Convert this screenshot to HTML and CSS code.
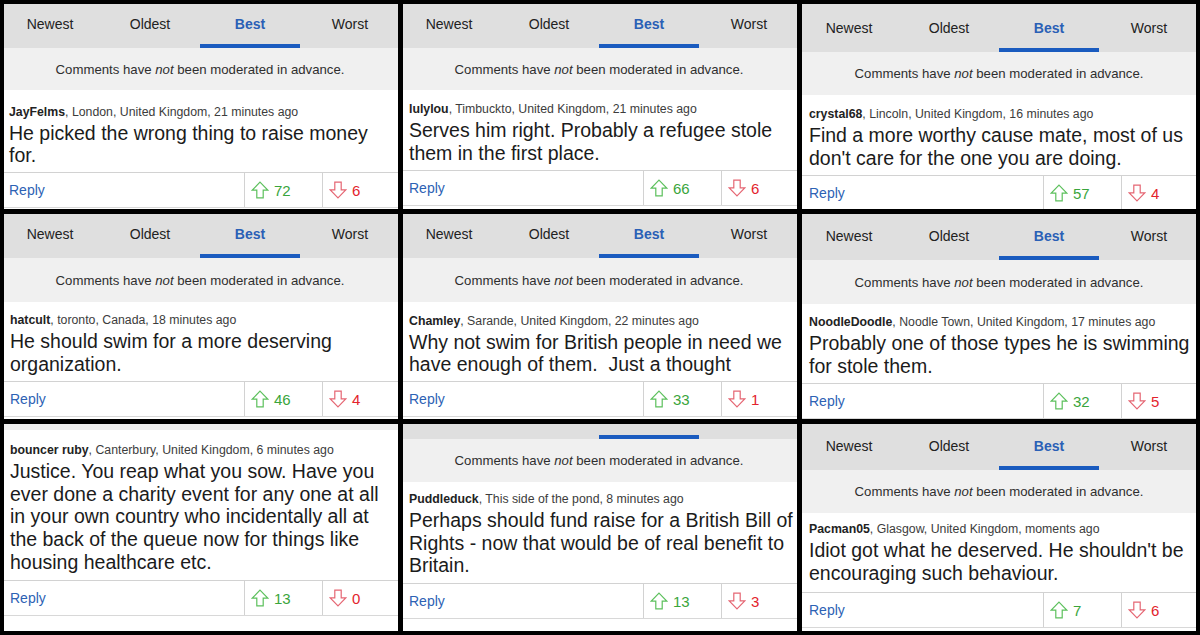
FILE: index.html
```html
<!DOCTYPE html>
<html lang="en">
<head>
<meta charset="utf-8">
<title>Comments</title>
<link rel="stylesheet" href="styles.css">
</head>
<body>
<svg width="0" height="0" class="defs" aria-hidden="true">
  <defs>
    <symbol id="up" viewBox="0 0 18 18"><path d="M9 1.2 L16.8 9.2 H12.2 V16.8 H5.8 V9.2 H1.2 Z" fill="none" stroke="currentColor" stroke-width="1.2" stroke-linejoin="miter"/></symbol>
    <symbol id="down" viewBox="0 0 18 18"><path d="M9 16.8 L16.8 8.8 H12.2 V1.2 H5.8 V8.8 H1.2 Z" fill="none" stroke="currentColor" stroke-width="1.2" stroke-linejoin="miter"/></symbol>
  </defs>
</svg>
<main class="grid">

  <section class="panel p1"><div class="inner">
    <nav class="tabs"><span class="tab">Newest</span><span class="tab">Oldest</span><span class="tab active">Best</span><span class="tab">Worst</span></nav>
    <div class="notice">Comments have&nbsp;<em>not</em>&nbsp;been moderated in advance.</div>
    <article class="comment"><p class="meta"><b>JayFelms</b>, London, United Kingdom, 21 minutes ago</p><p class="text">He picked the wrong thing to raise money for.</p></article>
    <footer class="actions"><span class="reply">Reply</span><span class="vote up"><svg><use href="#up"/></svg>72</span><span class="vote down"><svg><use href="#down"/></svg>6</span></footer>
  </div></section>

  <section class="panel p2"><div class="inner">
    <nav class="tabs"><span class="tab">Newest</span><span class="tab">Oldest</span><span class="tab active">Best</span><span class="tab">Worst</span></nav>
    <div class="notice">Comments have&nbsp;<em>not</em>&nbsp;been moderated in advance.</div>
    <article class="comment"><p class="meta"><b>lulylou</b>, Timbuckto, United Kingdom, 21 minutes ago</p><p class="text">Serves him right. Probably a refugee stole them in the first place.</p></article>
    <footer class="actions"><span class="reply">Reply</span><span class="vote up"><svg><use href="#up"/></svg>66</span><span class="vote down"><svg><use href="#down"/></svg>6</span></footer>
  </div></section>

  <section class="panel p3"><div class="inner">
    <nav class="tabs"><span class="tab">Newest</span><span class="tab">Oldest</span><span class="tab active">Best</span><span class="tab">Worst</span></nav>
    <div class="notice">Comments have&nbsp;<em>not</em>&nbsp;been moderated in advance.</div>
    <article class="comment"><p class="meta"><b>crystal68</b>, Lincoln, United Kingdom, 16 minutes ago</p><p class="text">Find a more worthy cause mate, most of us don't care for the one you are doing.</p></article>
    <footer class="actions"><span class="reply">Reply</span><span class="vote up"><svg><use href="#up"/></svg>57</span><span class="vote down"><svg><use href="#down"/></svg>4</span></footer>
  </div></section>

  <section class="panel p4"><div class="inner">
    <nav class="tabs"><span class="tab">Newest</span><span class="tab">Oldest</span><span class="tab active">Best</span><span class="tab">Worst</span></nav>
    <div class="notice">Comments have&nbsp;<em>not</em>&nbsp;been moderated in advance.</div>
    <article class="comment"><p class="meta"><b>hatcult</b>, toronto, Canada, 18 minutes ago</p><p class="text">He should swim for a more deserving organization.</p></article>
    <footer class="actions"><span class="reply">Reply</span><span class="vote up"><svg><use href="#up"/></svg>46</span><span class="vote down"><svg><use href="#down"/></svg>4</span></footer>
  </div></section>

  <section class="panel p5"><div class="inner">
    <nav class="tabs"><span class="tab">Newest</span><span class="tab">Oldest</span><span class="tab active">Best</span><span class="tab">Worst</span></nav>
    <div class="notice">Comments have&nbsp;<em>not</em>&nbsp;been moderated in advance.</div>
    <article class="comment"><p class="meta"><b>Chamley</b>, Sarande, United Kingdom, 22 minutes ago</p><p class="text">Why not swim for British people in need we have enough of them. &nbsp;Just a thought</p></article>
    <footer class="actions"><span class="reply">Reply</span><span class="vote up"><svg><use href="#up"/></svg>33</span><span class="vote down"><svg><use href="#down"/></svg>1</span></footer>
  </div></section>

  <section class="panel p6"><div class="inner">
    <nav class="tabs"><span class="tab">Newest</span><span class="tab">Oldest</span><span class="tab active">Best</span><span class="tab">Worst</span></nav>
    <div class="notice">Comments have&nbsp;<em>not</em>&nbsp;been moderated in advance.</div>
    <article class="comment"><p class="meta"><b>NoodleDoodle</b>, Noodle Town, United Kingdom, 17 minutes ago</p><p class="text">Probably one of those types he is swimming for stole them.</p></article>
    <footer class="actions"><span class="reply">Reply</span><span class="vote up"><svg><use href="#up"/></svg>32</span><span class="vote down"><svg><use href="#down"/></svg>5</span></footer>
  </div></section>

  <section class="panel p7"><div class="inner">
    <div class="strip"></div>
    <article class="comment"><p class="meta"><b>bouncer ruby</b>, Canterbury, United Kingdom, 6 minutes ago</p><p class="text">Justice. You reap what you sow. Have you ever done a charity event for any one at all in your own country who incidentally all at the back of the queue now for things like housing healthcare etc.</p></article>
    <footer class="actions"><span class="reply">Reply</span><span class="vote up"><svg><use href="#up"/></svg>13</span><span class="vote down"><svg><use href="#down"/></svg>0</span></footer>
  </div></section>

  <section class="panel p8"><div class="inner">
    <nav class="tabs"><span class="tab"></span><span class="tab"></span><span class="tab active"></span><span class="tab"></span></nav>
    <div class="notice">Comments have&nbsp;<em>not</em>&nbsp;been moderated in advance.</div>
    <article class="comment"><p class="meta"><b>Puddleduck</b>, This side of the pond, 8 minutes ago</p><p class="text">Perhaps should fund raise for a British Bill of Rights - now that would be of real benefit to Britain.</p></article>
    <footer class="actions"><span class="reply">Reply</span><span class="vote up"><svg><use href="#up"/></svg>13</span><span class="vote down"><svg><use href="#down"/></svg>3</span></footer>
  </div></section>

  <section class="panel p9"><div class="inner">
    <nav class="tabs"><span class="tab">Newest</span><span class="tab">Oldest</span><span class="tab active">Best</span><span class="tab">Worst</span></nav>
    <div class="notice">Comments have&nbsp;<em>not</em>&nbsp;been moderated in advance.</div>
    <article class="comment"><p class="meta"><b>Pacman05</b>, Glasgow, United Kingdom, moments ago</p><p class="text">Idiot got what he deserved. He shouldn't be encouraging such behaviour.</p></article>
    <footer class="actions"><span class="reply">Reply</span><span class="vote up"><svg><use href="#up"/></svg>7</span><span class="vote down"><svg><use href="#down"/></svg>6</span></footer>
  </div></section>

</main>
</body>
</html>
```
FILE: styles.css
```css
html, body {
  margin: 0;
  padding: 0;
  background: #000;
}
body {
  font-family: "Liberation Sans", Arial, sans-serif;
  width: 1200px;
  height: 635px;
  overflow: hidden;
}
.defs {
  position: absolute;
  width: 0;
  height: 0;
}
.grid {
  display: grid;
  grid-template-columns: 394px 394px 394px;
  grid-template-rows: 205px 205px 207px;
  column-gap: 5px;
  row-gap: 5px;
  padding: 4px;
}
.panel {
  background: #fff;
  overflow: hidden;
  --sx: -4px;
  --lift: 0px;
  --extra: 0px;
  --nh: 43px;
  --ch: 79px;
  --pt: 9px;
  --pl: 10px;
}
.inner {
  width: 400px;
  margin-left: var(--sx);
  margin-top: var(--lift);
}
.tabs {
  display: flex;
  background: #dfdfdf;
  padding-top: var(--extra);
}
.tab {
  width: 100px;
  height: 44px;
  box-sizing: border-box;
  padding-bottom: 4px;
  display: flex;
  align-items: center;
  justify-content: center;
  font-size: 14px;
  color: #222;
}
.tab.active {
  color: #2a60b6;
  font-weight: bold;
  padding-bottom: 0;
  border-bottom: 4px solid #1a5bbf;
}
.notice {
  height: var(--nh);
  background: #f0f0f0;
  display: flex;
  align-items: center;
  justify-content: center;
  font-size: 13.2px;
  color: #2e2e2e;
}
.notice em {
  font-style: italic;
}
.strip {
  height: 6px;
  background: #efefef;
}
.comment {
  height: var(--ch);
  box-sizing: border-box;
  padding: var(--pt) 3px 0 var(--pl);
  background: #fff;
}
.meta {
  margin: 0;
  font-size: 12.3px;
  line-height: 16px;
  color: #3c3c3c;
  white-space: nowrap;
}
.meta b {
  color: #222;
}
.text {
  margin: 2px 0 0;
  font-size: 19.5px;
  line-height: 22.7px;
  color: #1b1b1b;
}
.actions {
  display: flex;
  height: 36px;
  box-sizing: border-box;
  border-top: 1px solid #d2d2d2;
  border-bottom: 1px solid #d8d8d8;
  background: #fff;
}
.reply {
  width: 244px;
  box-sizing: border-box;
  padding-left: var(--pl);
  display: flex;
  align-items: center;
  font-size: 14px;
  color: #2d62b4;
}
.vote {
  width: 78px;
  box-sizing: border-box;
  border-left: 1px solid #d2d2d2;
  padding-left: 6px;
  display: flex;
  align-items: center;
  gap: 5px;
  font-size: 15px;
}
.vote svg {
  width: 18px;
  height: 18px;
  flex: none;
}
.vote.up {
  color: #3aa53c;
}
.vote.up svg {
  color: #5cc05c;
}
.vote.down {
  color: #e3232d;
}
.vote.down svg {
  color: #e56673;
}

.p1 { --nh: 42px; --ch: 82px; --pt: 13.5px; --pl: 9px; }
.p2 { --nh: 42px; --ch: 80px; --pt: 11px; }
.p3 { --sx: -3px; --extra: 4px; --nh: 43px; --ch: 80px; --pt: 11px; }
.p4 { --nh: 44px; --ch: 79px; --pt: 10px; }
.p5 { --nh: 44px; --ch: 79px; --pt: 10.5px; }
.p6 { --sx: -3px; --extra: 2px; --nh: 44px; --ch: 79px; --pt: 10px; }
.p7 { --ch: 150px; --pt: 12px; }
.p8 { --lift: -29px; --nh: 43px; --ch: 101px; --pt: 9px; }
.p9 { --sx: -3px; --extra: 2px; --nh: 43px; --ch: 79px; --pt: 8px; }
```
